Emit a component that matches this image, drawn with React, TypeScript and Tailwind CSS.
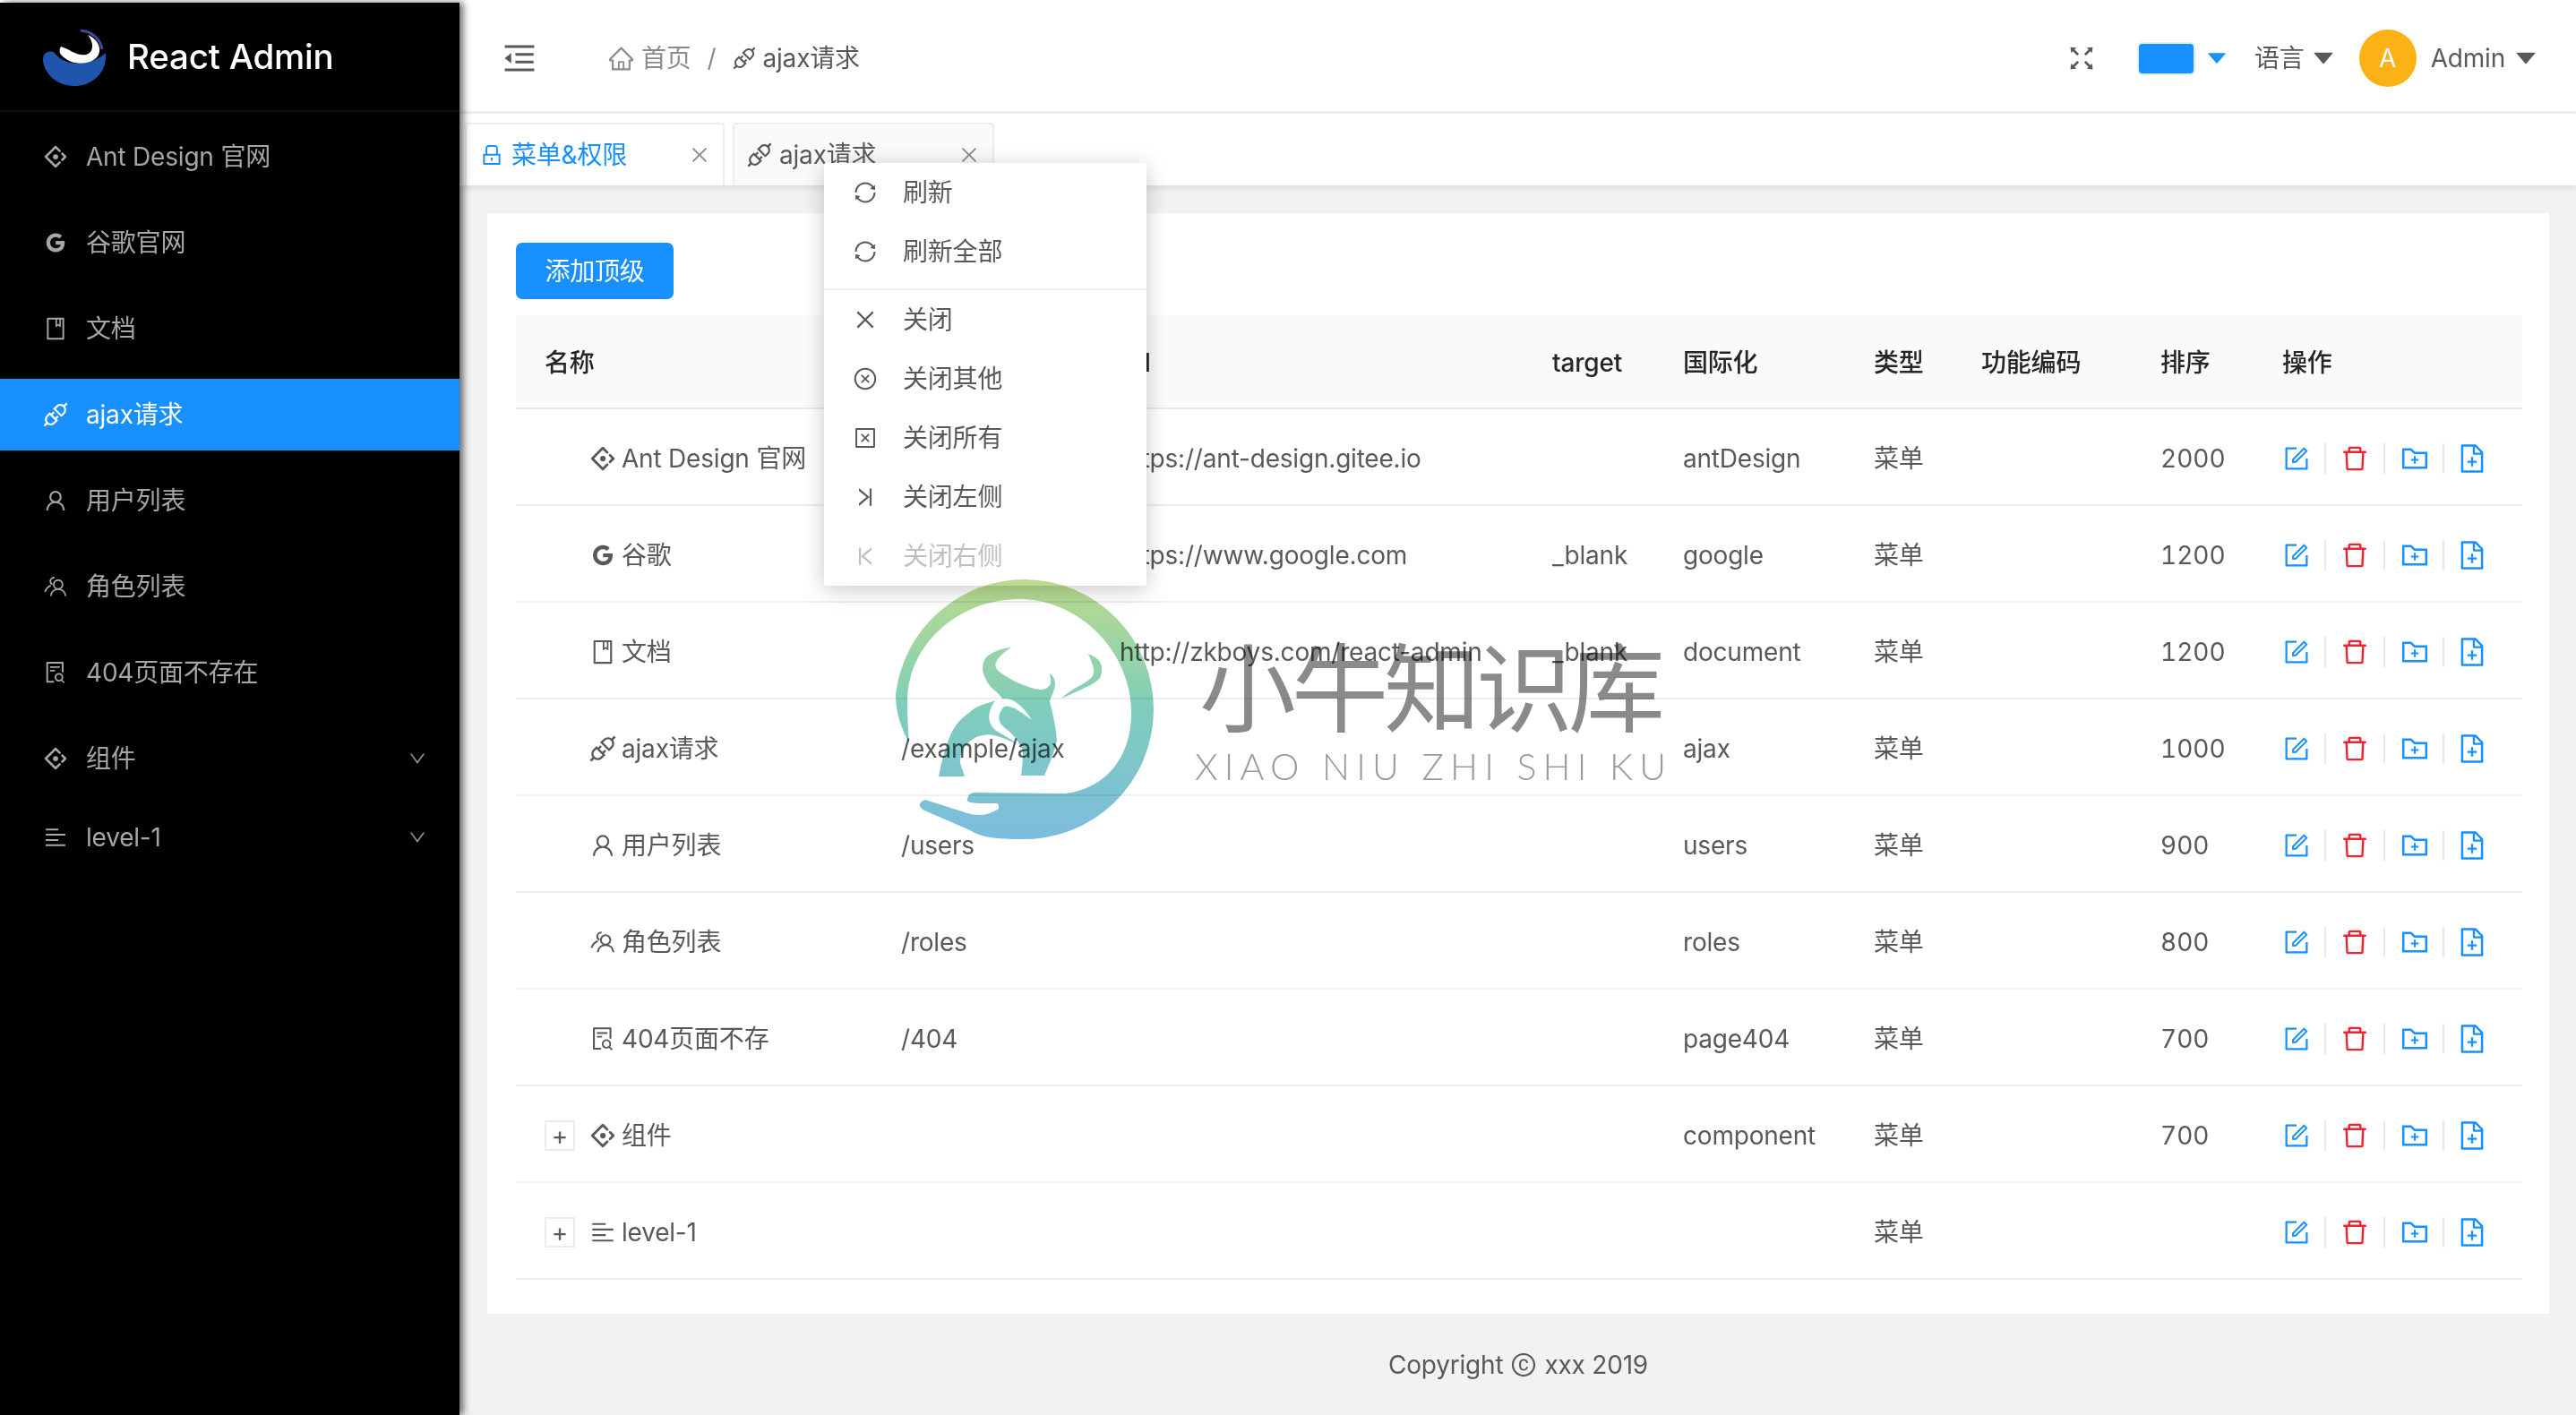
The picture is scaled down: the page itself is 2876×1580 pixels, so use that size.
import type { ReactNode } from "react";
import {
  AiFillCaretDown,
  AiOutlineAlignLeft,
  AiOutlineAntDesign,
  AiOutlineApi,
  AiOutlineBook,
  AiOutlineClose,
  AiOutlineCloseCircle,
  AiOutlineCloseSquare,
  AiOutlineCopyright,
  AiOutlineDelete,
  AiOutlineDown,
  AiOutlineFileAdd,
  AiOutlineFileSearch,
  AiOutlineFolderAdd,
  AiOutlineForm,
  AiOutlineFullscreen,
  AiOutlineGoogle,
  AiOutlineHome,
  AiOutlineLock,
  AiOutlineMenuFold,
  AiOutlineSync,
  AiOutlineUser,
  AiOutlineVerticalLeft,
  AiOutlineVerticalRight,
} from "react-icons/ai";

function RoleIcon({ className }: { className?: string }) {
  return (
    <svg viewBox="0 0 24 24" fill="none" stroke="currentColor" strokeWidth="1.6" className={className}>
      <circle cx="14.5" cy="10" r="4.2" />
      <path d="M7.5 21c.4-4 3.300-6.500 7-6.500s6.600 2.500 7 6.500" />
      <path d="M11 3.500A3.600 3.600 0 0 0 7 6.500c0 1.500.7 2.800 2 3.500" />
      <path d="M7.500 11C5 11.800 3 14 2 17" />
    </svg>
  );
}

// the api glyph sits small in its box, so it gets scaled up a bit
function ApiIcon({ className }: { className?: string }) {
  return <AiOutlineApi className={`${className} scale-[1.2]`} />;
}

const GRID = "grid grid-cols-[398px_244px_483px_146px_213px_120px_200px_136px_1fr] items-center";

const sideMenu = [
  { icon: AiOutlineAntDesign, label: "Ant Design 官网", gap: "mb-[16px]" },
  { icon: AiOutlineGoogle, label: "谷歌官网", gap: "mb-[16px]" },
  { icon: AiOutlineBook, label: "文档", gap: "mb-[16px]" },
  { icon: ApiIcon, label: "ajax请求", gap: "mb-[16px]", active: true },
  { icon: AiOutlineUser, label: "用户列表", gap: "mb-[16px]" },
  { icon: RoleIcon, label: "角色列表", gap: "mb-[16px]" },
  { icon: AiOutlineFileSearch, label: "404页面不存在", gap: "mb-[16px]" },
  { icon: AiOutlineAntDesign, label: "组件", gap: "mb-[8px]", arrow: true },
  { icon: AiOutlineAlignLeft, label: "level-1", gap: "mb-[8px]", arrow: true },
];

const rows = [
  { icon: AiOutlineAntDesign, name: "Ant Design 官网", url: "https://ant-design.gitee.io", code: "antDesign", order: "2000" },
  { icon: AiOutlineGoogle, name: "谷歌", url: "https://www.google.com", target: "_blank", code: "google", order: "1200" },
  { icon: AiOutlineBook, name: "文档", url: "http://zkboys.com/react-admin", target: "_blank", code: "document", order: "1200" },
  { icon: ApiIcon, name: "ajax请求", path: "/example/ajax", code: "ajax", order: "1000" },
  { icon: AiOutlineUser, name: "用户列表", path: "/users", code: "users", order: "900" },
  { icon: RoleIcon, name: "角色列表", path: "/roles", code: "roles", order: "800" },
  { icon: AiOutlineFileSearch, name: "404页面不存", path: "/404", code: "page404", order: "700" },
  { icon: AiOutlineAntDesign, name: "组件", code: "component", order: "700", expand: true },
  { icon: AiOutlineAlignLeft, name: "level-1", expand: true },
];

const contextMenu = [
  [
    { icon: AiOutlineSync, label: "刷新" },
    { icon: AiOutlineSync, label: "刷新全部" },
  ],
  [
    { icon: AiOutlineClose, label: "关闭" },
    { icon: AiOutlineCloseCircle, label: "关闭其他" },
    { icon: AiOutlineCloseSquare, label: "关闭所有" },
    { icon: AiOutlineVerticalLeft, label: "关闭左侧" },
    { icon: AiOutlineVerticalRight, label: "关闭右侧", disabled: true },
  ],
];

function Logo() {
  return (
    <svg viewBox="0 0 70 65" className="w-[70px] h-[65px]">
      <path d="M0 35C0 28 6 25 12 27C22 42 50 46 70 28C72 50 55 65 35 65C15 65 0 50 0 35Z" fill="#1f55ad" />
      <path d="M20 21C30 24 38 32 48 30C56 28 58 18 50 8C60 12 66 22 62 30C56 42 32 44 20 30Q17 25 20 21Z" fill="#fff" />
      <path d="M42 3C54 4 64 12 66 24" fill="none" stroke="#3a4a9a" strokeWidth="3" />
    </svg>
  );
}

function Sidebar() {
  return (
    <aside className="relative z-20 w-[513px] shrink-0 mt-[3px] bg-black shadow-[4px_0_8px_rgba(0,0,0,0.6)]">
      <div className="flex items-center h-[122px] pl-[48px] gap-[24px] border-b-[2px] border-[#101010]">
        <Logo />
        <span className="text-[38.500px] font-medium text-white leading-none">React Admin</span>
      </div>
      <nav className="pt-[10px]">
        {sideMenu.map((m) => {
          const Icon = m.icon;
          return (
            <div
              key={m.label}
              className={
                m.active
                  ? `flex items-center h-[80px] ${m.gap} pl-[48px] pr-[36px] gap-[20px] bg-[#1890ff] text-white`
                  : `flex items-center h-[80px] ${m.gap} pl-[48px] pr-[36px] gap-[20px] text-[#a6a6a6]`
              }
            >
              <Icon className="w-[28px] h-[28px] shrink-0" />
              <span className="flex-1">{m.label}</span>
              {m.arrow && <AiOutlineDown className="w-[22px] h-[22px] text-[#8c8c8c]" />}
            </div>
          );
        })}
      </nav>
    </aside>
  );
}

function Header() {
  return (
    <header className="relative z-10 flex items-center h-[127px] pt-[6px] pl-[46px] pr-[41px] bg-white border-b-[3px] border-[#f0f0f0]">
      <AiOutlineMenuFold className="w-[42px] h-[42px] text-[#595959]" />
      <div className="flex items-center ml-[77px] text-[#8c8c8c]">
        <AiOutlineHome className="w-[31px] h-[31px] mr-[7px]" />
        <span>首页</span>
        <span className="mx-[18px]">/</span>
        <ApiIcon className="w-[26px] h-[26px] mr-[8px] text-[#595959]" />
        <span className="text-[#595959]">ajax请求</span>
      </div>
      <div className="flex items-center ml-auto">
        <AiOutlineFullscreen className="w-[36px] h-[36px] text-[#595959]" />
        <span className="ml-[46px] w-[61px] h-[33px] rounded-[4px] bg-[#1890ff] shadow-[0_0_0_2px_#d9efff]" />
        <AiFillCaretDown className="ml-[12px] w-[28px] h-[28px] text-[#1890ff]" />
        <span className="ml-[28px]">语言</span>
        <AiFillCaretDown className="ml-[6px] w-[30px] h-[30px] text-[#595959]" />
        <span className="ml-[25px] flex items-center justify-center w-[64px] h-[64px] rounded-full bg-[#fbb216] text-white">A</span>
        <span className="ml-[16px]">Admin</span>
        <AiFillCaretDown className="ml-[8px] w-[30px] h-[30px] text-[#595959]" />
      </div>
    </header>
  );
}

function Tab({ icon, label, active, width }: { icon: ReactNode; label: string; active?: boolean; width: string }) {
  return (
    <div
      className={`flex items-center h-[70px] ${width} pl-[14px] pr-[14px] gap-[8px] rounded-t-[4px] border-x-[2px] border-t-[2px] border-[#eeeeee] ${
        active ? "bg-white text-[#1890ff]" : "bg-[#fafafa] text-[#595959]"
      }`}
    >
      {icon}
      <span className="flex-1">{label}</span>
      <AiOutlineClose className="w-[24px] h-[24px] text-[#8c8c8c]" />
    </div>
  );
}

function Tabs() {
  return (
    <div className="relative z-10 flex items-end gap-[9px] h-[80px] pl-[6px] bg-white shadow-[0_3px_8px_rgba(0,0,0,0.1)]">
      <Tab active width="w-[290px]" label="菜单&权限" icon={<AiOutlineLock className="w-[28px] h-[28px]" />} />
      <Tab width="w-[292px]" label="ajax请求" icon={<ApiIcon className="w-[28px] h-[28px]" />} />
    </div>
  );
}

function Actions() {
  return (
    <div className="flex items-center">
      <AiOutlineForm className="w-[32px] h-[32px] text-[#1890ff]" />
      <span className="w-[2px] h-[34px] mx-[15px] bg-[#e8e8e8]" />
      <AiOutlineDelete className="w-[34px] h-[34px] text-[#f5222d]" />
      <span className="w-[2px] h-[34px] mx-[15px] bg-[#e8e8e8]" />
      <AiOutlineFolderAdd className="w-[36px] h-[36px] text-[#1890ff]" />
      <span className="w-[2px] h-[34px] mx-[13px] bg-[#e8e8e8]" />
      <AiOutlineFileAdd className="w-[36px] h-[36px] text-[#1890ff]" />
    </div>
  );
}

function MenuTable() {
  return (
    <div>
      <div className={`${GRID} h-[105px] pl-[32px] pt-[2px] bg-[#fafafa] border-b-[2px] border-[#e8e8e8] font-medium text-[#262626]`}>
        <span>名称</span>
        <span>path</span>
        <span>url</span>
        <span>target</span>
        <span>国际化</span>
        <span>类型</span>
        <span>功能编码</span>
        <span>排序</span>
        <span>操作</span>
      </div>
      {rows.map((r) => {
        const Icon = r.icon;
        return (
          <div key={r.name} className={`${GRID} h-[108px] pl-[32px] pt-[3px] border-b-[2px] border-[#eeeeee]`}>
            <div className="flex items-center">
              {r.expand ? (
                <span className="flex items-center justify-center w-[34px] h-[34px] mr-[16px] border-[2px] border-[#ececec] text-[#595959] leading-none">+</span>
              ) : (
                <span className="w-[50px]" />
              )}
              <Icon className="w-[30px] h-[30px] mr-[6px] shrink-0" />
              <span className="whitespace-nowrap">{r.name}</span>
            </div>
            <span>{r.path}</span>
            <span className="whitespace-nowrap">{r.url}</span>
            <span>{r.target}</span>
            <span>{r.code}</span>
            <span>菜单</span>
            <span />
            <span className="tabular-nums tracking-normal">{r.order}</span>
            <Actions />
          </div>
        );
      })}
    </div>
  );
}

function ContextMenu() {
  return (
    <div className="absolute z-30 left-[920px] top-[182px] w-[360px] bg-white rounded-[2px] shadow-[0_4px_24px_rgba(0,0,0,0.22)]">
      {contextMenu.map((group, i) => (
        <div key={i} className={i > 0 ? "mt-[8px] border-t-[2px] border-[#f0f0f0]" : ""}>
          {group.map((item) => {
            const Icon = item.icon;
            return (
              <div
                key={item.label}
                className={`flex items-center h-[66px] pl-[32px] gap-[28px] ${item.disabled ? "text-[#bfbfbf]" : "text-[#595959]"}`}
              >
                <Icon className="w-[28px] h-[28px]" />
                <span>{item.label}</span>
              </div>
            );
          })}
        </div>
      ))}
    </div>
  );
}

function Watermark() {
  return (
    <div className="absolute z-40 left-[999px] top-[646px] flex mix-blend-multiply pointer-events-none">
      <svg viewBox="0 0 290 292" className="w-[290px] h-[292px]">
        <defs>
          <linearGradient id="wm" gradientUnits="userSpaceOnUse" x1="0" y1="0" x2="0" y2="290">
            <stop offset="0" stopColor="#bcdc8c" />
            <stop offset="0.5" stopColor="#7fcdbb" />
            <stop offset="1" stopColor="#7dbcdf" />
          </linearGradient>
        </defs>
        <path
          d="M16 184C6 165 1 148 1 130A145 145 0 0 1 146 1A145 145 0 0 1 289 146A145 145 0 0 1 138 291C110 291 95 288 84 281L33 259Q22 252 34 247L81 262Q100 268 116 257Q116 250 114 251L93 251Q78 250 81 246Q82 240 88 239L190 240C235 235 264 200 264 150C264 80 205 23 139 23C70 23 14 75 14 137C14 155 15 170 16 184Z"
          fill="url(#wm)"
        />
        <path
          d="M130 77C118 78 108 82 102 88C97 94 97 104 101 111C105 120 110 124 114 127L123 137L113 136C100 140 90 143 84 149C74 156 68 163 64 171C58 182 52 205 49 221L78 221C76 212 72 208 73 201C74 193 78 188 81 184C86 180 90 177 94 176C102 174 108 174 114 176C122 178 128 181 134 184C140 187 143 190 143 194C143 204 142 212 141 220L167 220C172 208 178 195 181 181C180 165 176 150 173 137C175 130 179 125 179 117C179 112 176 108 173 106C174 112 175 116 173 119C170 123 167 124 164 124C156 124 150 121 144 119C136 116 130 113 124 109C118 105 110 100 113 94C115 88 122 82 130 77Z"
          fill="url(#wm)"
        />
        <path
          d="M113 135C103 148 103 160 111 168C120 176 134 178 143 194C140 182 130 172 122 166C114 160 115 150 122 143C130 140 142 150 153 158C146 146 134 134 124 134Z"
          fill="#fff"
        />
        <path d="M216 84C226 88 232 94 231 101C231 106 230 110 228 112C222 118 214 121 208 124L186 134C192 128 198 124 204 121C211 117 217 114 221 109C223 104 222 100 221 97C220 92 217 88 216 84Z" fill="url(#wm)" />
      </svg>
      <div className="ml-[50px] mt-[54px] w-[530px] text-[#8a8a8a] font-['Noto_Sans_CJK_SC',sans-serif]">
        <div className="text-[108px] leading-[124px] font-normal tracking-[-5px] whitespace-nowrap">小牛知识库</div>
        <div className="mt-[10px] -ml-[5px] text-[41px] leading-[44px] font-light tracking-[7.200px] whitespace-nowrap text-[#9a9a9a] font-['Lato','Noto_Sans',sans-serif]">XIAO NIU ZHI SHI KU</div>
      </div>
    </div>
  );
}

export default function App() {
  return (
    <div className="relative flex w-[2876px] h-[1580px] overflow-hidden bg-white text-[28px] leading-[40px] tracking-[-0.2px] text-[#595959] font-['Inter','Noto_Sans_CJK_SC',sans-serif]">
      <Sidebar />
      <div className="flex flex-col flex-1 min-w-0 bg-[#f2f2f2]">
        <Header />
        <Tabs />
        <main className="flex-1 pt-[31px] pl-[31px] pr-[30px]">
          <div className="h-[1229px] pt-[33px] pl-[32px] pr-[30px] bg-white">
            <button className="block w-[176px] h-[63px] mb-[18px] rounded-[7px] bg-[#1890ff] text-white">添加顶级</button>
            <MenuTable />
          </div>
          <footer className="flex items-center justify-center h-[113px] gap-[8px]">
            Copyright <AiOutlineCopyright className="w-[30px] h-[30px]" /> xxx 2019
          </footer>
        </main>
      </div>
      <ContextMenu />
      <Watermark />
    </div>
  );
}
